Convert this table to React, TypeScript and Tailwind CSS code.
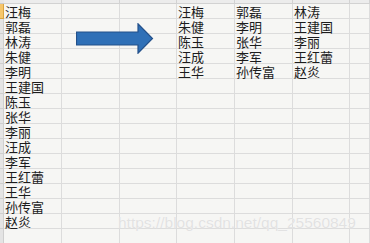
import { type FC } from "react";

const names = [
  "汪梅",
  "郭磊",
  "林涛",
  "朱健",
  "李明",
  "王建国",
  "陈玉",
  "张华",
  "李丽",
  "汪成",
  "李军",
  "王红蕾",
  "王华",
  "孙传富",
  "赵炎",
];

// five rows, three names across
const table = [0, 1, 2, 3, 4].map((r) => names.slice(r * 3, r * 3 + 3));

const ROWS = 16;

const Cell: FC<{ text?: string }> = ({ text }) => (
  <div className="h-[15px] whitespace-nowrap border-b border-r border-[#dcdcdc] pl-[1px] text-[13px] leading-[15px] text-[#1c1c1c]">
    {text}
  </div>
);

const Arrow: FC = () => (
  <svg
    className="absolute left-[76px] top-[23px]"
    width="78"
    height="31"
    viewBox="0 0 78 31"
  >
    <polygon
      points="0.5,9 62,9 62,0.8 76.5,15.5 62,30.2 62,22 0.5,22"
      fill="#2f70b7"
      stroke="#23508a"
      strokeWidth="1.2"
    />
  </svg>
);

export default function App() {
  return (
    <div
      className="relative h-[243px] w-[370px] overflow-hidden bg-[#f6f6f4]"
      style={{ fontFamily: '"Noto Sans CJK SC", "Liberation Sans", sans-serif' }}
    >
      <div className="grid grid-cols-[4px_58px_58px_57px_58px_58px_57px_1fr]">
        {/* column header edge */}
        <div className="h-[4px] border-b border-[#c9c9c9] bg-[#e6e6e6]" />
        {Array.from({ length: 7 }).map((_, i) => (
          <div
            key={i}
            className="h-[4px] border-b border-r border-[#d2d2d2] bg-[#ececec]"
          />
        ))}

        {Array.from({ length: ROWS }).map((_, r) => (
          <div key={r} className="contents">
            <div
              className={
                r === 0
                  ? "h-[15px] border-b border-r border-[#d9a441] bg-[#f6c66a]"
                  : "h-[15px] border-b border-r border-[#cfcfcf] bg-[#e4e4e4]"
              }
            />
            <Cell text={names[r]} />
            <Cell />
            <Cell />
            <Cell text={table[r]?.[0]} />
            <Cell text={table[r]?.[1]} />
            <Cell text={table[r]?.[2]} />
            <Cell />
          </div>
        ))}
      </div>

      <Arrow />

      <span
        className="absolute left-[118px] top-[213px] text-[15.5px] leading-[19px] text-[#e2e2e2] [text-shadow:0_0_1px_#ffffff]"
        style={{ fontFamily: '"Liberation Sans", sans-serif' }}
      >
        https://blog.csdn.net/qq_25560849
      </span>
    </div>
  );
}
